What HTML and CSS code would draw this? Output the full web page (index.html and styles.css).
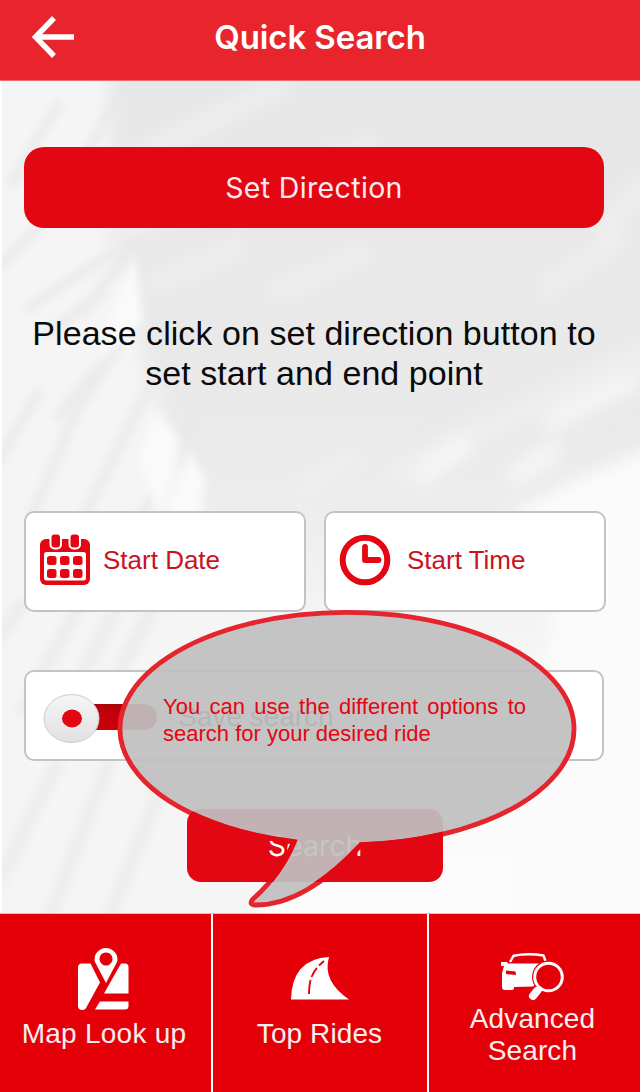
FILE: index.html
```
<!DOCTYPE html>
<html lang="en">
<head>
<meta charset="utf-8">
<title>Quick Search</title>
<link rel="stylesheet" href="styles.css">
</head>
<body>
<div class="app">
  <header class="header">
    <svg class="back" viewBox="0 0 46 44" aria-label="Back"><path d="M26 3 7.500 22 26 41M7 22H46" fill="none" stroke="#fff" stroke-width="5.400"/></svg>
    <h1 class="title">Quick Search</h1>
  </header>

  <main class="content">
    <svg class="backdrop" viewBox="0 80 640 834" preserveAspectRatio="none" aria-hidden="true">
      <defs>
        <linearGradient id="base" x1="0" y1="80" x2="0" y2="914" gradientUnits="userSpaceOnUse">
          <stop offset="0" stop-color="#e7e7e7"/><stop offset=".45" stop-color="#eaeaea"/><stop offset=".65" stop-color="#f4f4f4"/><stop offset="1" stop-color="#fdfdfd"/>
        </linearGradient>
        <filter id="soft" x="-20%" y="-20%" width="140%" height="140%"><feGaussianBlur stdDeviation="9"/></filter>
        <filter id="fine" x="-20%" y="-20%" width="140%" height="140%"><feGaussianBlur stdDeviation="4"/></filter>
      </defs>
      <rect y="80" width="640" height="834" fill="url(#base)"/>
      <path filter="url(#soft)" fill="#f5f5f5" d="M-30 60H110L110 235 130 290 145 370 165 420 195 510 240 620 260 940H-30Z"/>
      <g filter="url(#soft)" fill="none" stroke="#f0f0f0" stroke-width="16">
        <path d="M120 165 290 80M110 235 375 145M150 285 245 245M270 295 370 250M390 475 650 350M540 290 625 235M300 490 360 450M600 235 650 180"/>
      </g>
      <path filter="url(#soft)" fill="#fbfbfb" d="M680 435 575 480 510 515 555 610 500 940H680Z"/>
      <g filter="url(#soft)" fill="none" stroke="#f7f7f7" stroke-width="18"><path d="M415 480 470 440M545 425 640 375M510 480 560 445"/></g>
      <g filter="url(#fine)" fill="none" stroke="#e9e9e9" stroke-opacity=".8" stroke-width="10">
        <path d="M10 185 60 100M75 175 120 90M-5 270 40 225M25 310 115 250M45 335 105 290M82 315 135 240M55 420 120 340M-10 475 40 390M30 520 75 415 115 350M82 520 125 435 155 375M140 520 170 465 188 430"/>
      </g>
      <g filter="url(#fine)" fill="none" stroke="#ededed" stroke-width="14">
        <path d="M-10 650 25 600M20 715 85 595M70 700 120 600M115 680 160 595M-10 900 60 760M45 930 110 760M105 930 160 790"/>
      </g>
      <path filter="url(#fine)" fill="#fafafa" d="M135 250 142 320 110 350 95 365ZM155 410 179 440 175 470 158 515 140 460ZM190 450 205 480 200 520 165 520Z"/>
      <rect y="80" width="2" height="834" fill="#fff"/>
    </svg>

    <button class="button button-direction">Set Direction</button>
    <p class="hint">Please click on set direction button to set start and end point</p>

    <div class="fields">
      <div class="card">
        <svg class="card-icon" viewBox="0 0 52 52">
          <rect x="1" y="5" width="50" height="46" rx="6" fill="#e30613"/>
          <rect x="5" y="18" width="42" height="28.500" rx="2.500" fill="#fff"/>
          <g fill="#e30613" stroke="#fff" stroke-width="2"><rect x="11.500" y="-.5" width="10.500" height="15" rx="4"/><rect x="30.500" y="-.5" width="10.500" height="15" rx="4"/></g>
          <g fill="#e30613"><rect x="8" y="22" width="9.500" height="9" rx="2.500"/><rect x="21" y="22" width="9.500" height="9" rx="2.500"/><rect x="34" y="22" width="9.500" height="9" rx="2.500"/><rect x="8" y="35" width="9.500" height="9" rx="2.500"/><rect x="21" y="35" width="9.500" height="9" rx="2.500"/><rect x="34" y="35" width="9.500" height="9" rx="2.500"/></g>
        </svg>
        <span class="card-label">Start Date</span>
      </div>
      <div class="card card-time">
        <svg class="card-icon" viewBox="0 0 52 52"><circle cx="26" cy="26" r="22.300" fill="none" stroke="#e30613" stroke-width="6"/><path d="M26 13V26H39.500" fill="none" stroke="#e30613" stroke-width="5.800" stroke-linecap="round" stroke-linejoin="round"/></svg>
        <span class="card-label">Start Time</span>
      </div>
    </div>

    <div class="save">
      <svg class="toggle" viewBox="42 690 118 58">
        <defs>
          <linearGradient id="track" x1="0" y1="0" x2="0" y2="1"><stop offset="0" stop-color="#a9040c"/><stop offset=".3" stop-color="#c3000a"/><stop offset="1" stop-color="#c9000a"/></linearGradient>
          <linearGradient id="knob" x1="0" y1="0" x2="0" y2="1"><stop offset="0" stop-color="#f5f5f5"/><stop offset="1" stop-color="#e1e1e1"/></linearGradient>
        </defs>
        <rect x="80" y="704" width="77" height="26" rx="13" fill="url(#track)"/>
        <ellipse cx="71.500" cy="718.500" rx="27.500" ry="24" fill="url(#knob)" stroke="#ccc"/>
        <ellipse cx="72" cy="718.500" rx="10" ry="9" fill="#e30613"/>
      </svg>
      <span class="save-label">Save search</span>
    </div>

    <button class="button button-search">Search</button>
  </main>

  <nav class="tabs">
    <a class="tab">
      <svg class="tab-icon icon-map" viewBox="0 0 52 62" fill="#fff">
        <path d="M4 15.500H12.500L22 34.500 8 60Q7 62 4.500 62Q0 62 0 58V19.500Q0 15.500 4 15.500ZM43 15.500H47Q50.500 15.500 50.500 19V45.500H26ZM22 53.500H50.500V58Q50.500 61.500 47 61.500H17Z"/>
        <path fill-rule="evenodd" d="M28 0A11.500 11 0 0 1 39 14L28 35 17 14A11.500 11 0 0 1 28 0ZM28 4.500A6.500 6.500 0 1 0 28.010 4.500Z"/>
      </svg>
      <span>Map Look up</span>
    </a>
    <a class="tab tab-top">
      <svg class="tab-icon icon-road" viewBox="0 0 60 43"><path d="M39 0Q32 24 59 42.500H1Q2 2 39 0Z" fill="#fff"/><path d="M19 37Q19 29 20.500 23M21.500 20Q24 14 27 11M29 8.500 34 4" fill="none" stroke="#e50009" stroke-width="1.900"/></svg>
      <span>Top Rides</span>
    </a>
    <a class="tab tab-advanced">
      <svg class="tab-icon icon-car" viewBox="0 0 64 50">
        <path d="M9 9 12.500 2.800Q27 0 42.500 2.500L44.500 8" fill="none" stroke="#fff" stroke-width="2.400"/>
        <path d="M7 10.500H38Q28 20 34 32L32 33.500 13 34V35Q13 37 11 37H4Q1 37 1 34V20L3 13H0V9H6Z" fill="#fff"/>
        <path d="M5 17.500 14.500 18.500 15 22 5 21Z" fill="#e50009"/>
        <circle cx="47.500" cy="24" r="16.500" fill="#e50009"/>
        <circle cx="47.500" cy="24" r="13.800" fill="#e50009" stroke="#fff" stroke-width="3"/>
        <path d="M36 38 32 43" stroke="#fff" stroke-width="8" stroke-linecap="round"/><path d="M37 35 41 38" stroke="#fff" stroke-width="2"/>
      </svg>
      <span>Advanced Search</span>
    </a>
  </nav>

  <aside class="tip">
    <svg class="tip-shape" viewBox="110 604 480 310">
      <defs>
        <clipPath id="over"><rect x="187" y="809" width="256" height="73" rx="14"/></clipPath>
        <path id="balloon" d="M361 844.800A227 116.300 0 1 0 294 841.800Q281 874 252.500 899.500Q249 904 254 905Q304 906 361 844.800Z"/>
      </defs>
      <use href="#balloon" fill="#bfbfbf" fill-opacity=".93"/>
      <use href="#balloon" fill="none" stroke="#e5242e" stroke-width="4.800" stroke-linejoin="round"/>
      <use href="#balloon" fill="none" stroke="#e30613" stroke-width="5.200" clip-path="url(#over)"/>
    </svg>
    <p class="tip-text">You can use the different options to search for your desired ride</p>
  </aside>
</div>
</body>
</html>
```
FILE: styles.css
```
* { box-sizing: border-box; }
body { margin: 0; font-family: "Liberation Sans", Arial, sans-serif; }
p, h1 { margin: 0; }
svg { display: block; flex: none; }

.app { position: relative; width: 640px; height: 1092px; overflow: hidden; display: flex; flex-direction: column; }

.header { height: 81px; padding: 0 28px; display: grid; grid-template-columns: 48px 1fr 48px; align-items: center; background: #e8252d; border-bottom: 1px solid #ee6b70; color: #fff; }
.back { width: 46px; height: 44px; margin-top: -6px; }
.title { margin-top: -7px; text-align: center; font: 600 33px/40px Inter, sans-serif; letter-spacing: -.1px; }

.content { position: relative; height: 832px; padding: 66px 34px 0 24px; display: flex; flex-direction: column; isolation: isolate; }
.backdrop { position: absolute; z-index: -1; inset: 0; width: 100%; height: 100%; }

.button { border: 0; padding: 0; background: #e30613; color: #fff; font: 400 28.500px/34px Inter, sans-serif; }
.button-direction { width: 580px; height: 81px; border-radius: 20px; color: #fbe9ee; letter-spacing: .35px; }
.hint { width: 580px; margin-top: 85px; text-align: center; font-size: 34px; line-height: 40px; letter-spacing: .05px; color: #0a0a0a; }

.fields { display: flex; gap: 18px; margin-top: 118px; }
.card { width: 282px; height: 101px; flex: none; display: flex; align-items: center; gap: 12px; padding: 0 13px 3px; background: #fff; border: 2px solid #c3c3c6; border-radius: 10px; }
.card-time { gap: 16px; }
.card-icon { width: 52px; height: 52px; }
.card-label { margin-top: -1px; font-size: 26px; line-height: 30px; color: #c8141e; }

.save { width: 580px; height: 91px; margin-top: 58px; padding: 6px 16px 0; display: flex; align-items: center; gap: 18px; background: #fff; border: 2px solid #c3c3c6; border-radius: 10px; }
.toggle { width: 118px; height: 58px; }
.save-label { margin-top: -4px; font-size: 28px; color: #333; }

.button-search { width: 256px; height: 73px; margin: 48px 0 0 163px; border-radius: 14px; }

.tabs { height: 179px; display: grid; grid-template-columns: 211px 214px 211px; gap: 2px; background: #fff; border-top: 1px solid #f8b0b3; }
.tab { display: flex; flex-direction: column; align-items: center; background: #e50009; color: #f7eff0; font-size: 28px; line-height: 32px; text-align: center; letter-spacing: .25px; padding: 34px 8px 0 5px; }
.icon-map { width: 52px; height: 62px; margin-bottom: 8px; }
.icon-road { width: 60px; height: 43px; margin: 9px 0 18px; }
.tab-top { padding-right: 6px; letter-spacing: .1px; }
.tab-advanced { padding: 39px 36px 0 32px; letter-spacing: .1px; }
.icon-car { width: 64px; height: 50px; margin-bottom: 0; }

.tip { position: absolute; left: 110px; top: 604px; width: 480px; height: 310px; padding: 89px 64px 0 53px; }
.tip-shape { position: absolute; inset: 0; width: 480px; height: 310px; }
.tip-text { position: relative; font-size: 22px; line-height: 27px; text-align: justify; color: #e30613; }
```
